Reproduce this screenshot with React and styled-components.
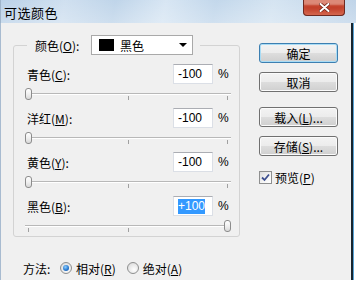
import React from "react";
import styled, { createGlobalStyle } from "styled-components";

const GlobalStyle = createGlobalStyle`
  html, body { margin: 0; padding: 0; background: #ffffff; }
  body {
    font-family: "Noto Sans CJK SC", "Liberation Sans", sans-serif;
    font-size: 12px;
    color: #000;
  }
  * { box-sizing: border-box; }
`;

const Window = styled.div`
  width: 356px;
  height: 280px;
  display: flex;
  flex-direction: column;
`;

const TitleBar = styled.div`
  height: 23px;
  flex: none;
  display: flex;
  align-items: flex-start;
  padding-left: 3px;
  background:
    linear-gradient(180deg, rgba(255,255,255,0.1), rgba(255,255,255,0.3)),
    linear-gradient(100deg, #b3cce5 0%, #cadcee 18%, #b8d0e7 32%, #d3e3f2 46%, #bcd3e9 60%, #d0e1f0 76%, #b8cfe6 100%);
  border-left: 1px solid #9fb4ca;
`;

const Title = styled.span`
  font-size: 13px;
  line-height: 13px;
  margin-top: 6px;
  letter-spacing: 0.5px;
`;

const CloseButton = styled.div`
  flex: 0 0 42px;
  margin-left: auto;
  margin-right: 11px;
  height: 16px;
  border: 1px solid #6e2a21;
  border-top-width: 0;
  border-radius: 0 0 4px 4px;
  background-color: #c2412b;
  box-shadow: inset 0 -6px 5px -3px #d66a52, inset 0 7px 2px -2px #dc8a78;
  display: flex;
  align-items: center;
  justify-content: center;
`;

const Body = styled.div`
  flex: 1;
  margin-right: 3px;
  background: #f0f0f0;
  border-left: 1px solid #a8bbd0;
  border-right: 2px solid #18252e;
  box-shadow: 1px 0 0 #5aa4d6;
  display: flex;
  flex-direction: column;
`;

const MainRow = styled.div`
  display: flex;
  align-items: flex-start;
  padding: 12px 0 0 12px;
`;

const GroupBox = styled.fieldset`
  width: 227px;
  margin: 0;
  padding: 9px 7px 0 13px;
  border: 1px solid #d3d3d3;
  border-radius: 3px;
  min-width: 0;
`;

const Legend = styled.legend`
  margin-left: 0;
  padding: 0 7px 0 8px;
  display: flex;
  align-items: center;
  gap: 3px;
  height: 20px;
`;

const LegendLabel = styled.span`
  width: 53px;
  white-space: nowrap;
`;

const Dropdown = styled.div`
  width: 102px;
  height: 20px;
  background: #fff;
  border: 1px solid #a9a9a9;
  display: flex;
  align-items: center;
  padding-left: 7px;
  gap: 6px;
`;

const Swatch = styled.div`
  width: 15px;
  height: 12px;
  background: ${(p) => p.$color};
`;

const Arrow = styled.div`
  margin-left: auto;
  margin-right: 5px;
  width: 0;
  height: 0;
  border-left: 4px solid transparent;
  border-right: 4px solid transparent;
  border-top: 4px solid #000;
`;

const Block = styled.div`
  margin-bottom: ${(p) => (p.$last ? 0 : 4)}px;
`;

const ControlRow = styled.div`
  display: flex;
  align-items: center;
  height: 20px;
`;

const Label = styled.span`
  flex: 1;
  white-space: nowrap;
`;

const NumberBox = styled.div`
  width: 40px;
  height: 20px;
  background: #fff;
  border: 1px solid #dbdfe6;
  border-top-color: #abadb3;
  display: flex;
  align-items: center;
  padding-left: 4px;
  font-family: "Liberation Sans", sans-serif;
  font-size: 12px;
`;

const Selected = styled.span`
  background: #3399ff;
  color: #fff;
  padding: 1px 0;
  line-height: 13px;
`;

const Percent = styled.span`
  width: 14px;
  margin-left: 5px;
  font-family: "Liberation Sans", sans-serif;
  font-size: 12px;
`;

const Slider = styled.div`
  position: relative;
  width: 206px;
  height: 20px;
  margin-left: -2px;
  padding-top: 9px;
`;

const Track = styled.div`
  height: 2px;
  border-top: 1px solid #b8b8b8;
  border-bottom: 1px solid #ffffff;
`;

const Tick = styled.div`
  position: absolute;
  top: 12px;
  width: 1px;
  height: 4px;
  background: #a0a0a0;
`;

const Thumb = styled.div`
  position: absolute;
  top: 4px;
  width: 7px;
  height: 12px;
  border: 1px solid #8c8c8c;
  border-radius: 3px;
  background: linear-gradient(180deg, #ffffff 0%, #f0f0f0 50%, #d8d8d8 100%);
`;

const RightColumn = styled.div`
  margin-left: 19px;
  padding-top: 8px;
  display: flex;
  flex-direction: column;
`;

const Button = styled.div`
  width: 79px;
  height: 20px;
  margin-bottom: ${(p) => p.$mb || 0}px;
  border: 1px solid ${(p) => (p.$default ? "#3c7fb1" : "#707070")};
  border-radius: 3px;
  background: linear-gradient(180deg, #f3f3f3 0%, #ececec 48%, #dddddd 52%, #cfcfcf 100%);
  box-shadow: inset 0 0 0 1px ${(p) => (p.$default ? "#a9dcf5" : "#fbfbfb")};
  display: flex;
  align-items: center;
  justify-content: center;
  white-space: nowrap;
`;

const CheckRow = styled.div`
  display: flex;
  align-items: center;
  gap: 3px;
  margin-top: 13px;
`;

const CheckBox = styled.div`
  width: 13px;
  height: 13px;
  border: 1px solid #8e8f8f;
  background: linear-gradient(135deg, #dcdcdc 0%, #f6f6f6 60%, #ffffff 100%);
  display: flex;
  align-items: center;
  justify-content: center;
`;

const BottomRow = styled.div`
  display: flex;
  align-items: center;
  height: 16px;
  margin-top: 23px;
  padding-left: 22px;
`;

const MethodLabel = styled.span`
  width: 37px;
`;

const RadioItem = styled.div`
  display: flex;
  align-items: center;
  gap: 4px;
  margin-right: 11px;
`;

const Radio = styled.div`
  width: 12px;
  height: 12px;
  border-radius: 50%;
  border: 1px solid #8e8f8f;
  background: radial-gradient(circle at 60% 65%, #ffffff 0%, #e6e6e6 60%, #d0d0d0 100%);
  display: flex;
  align-items: center;
  justify-content: center;
`;

const RadioDot = styled.div`
  width: 6px;
  height: 6px;
  border-radius: 50%;
  background: radial-gradient(circle at 40% 35%, #8fd0ff 0%, #2a7ad0 55%, #134f9c 100%);
`;

const channels = [
  { name: "青色", key: "C", value: -100 },
  { name: "洋红", key: "M", value: -100 },
  { name: "黄色", key: "Y", value: -100 },
  { name: "黑色", key: "B", value: 100, selected: true },
];

function Mnemonic({ text, k, suffix = "" }) {
  return (
    <>
      {text}(<u>{k}</u>){suffix}
    </>
  );
}

function SliderControl({ value }) {
  const left = ((value + 100) / 200) * (206 - 7);
  return (
    <Slider>
      <Track />
      <Tick style={{ left: 3 }} />
      <Tick style={{ left: 103 }} />
      <Tick style={{ left: 202 }} />
      <Thumb style={{ left }} />
    </Slider>
  );
}

export default function App() {
  return (
    <>
      <GlobalStyle />
      <Window>
        <TitleBar>
          <Title>可选颜色</Title>
          <CloseButton>
            <svg width="11" height="9" viewBox="0 0 11 9">
              <path d="M1.5 1 L9.5 8 M9.5 1 L1.5 8" stroke="#6a2014" strokeWidth="3.4" strokeLinecap="round" />
              <path d="M1.5 1 L9.5 8 M9.5 1 L1.5 8" stroke="#ffffff" strokeWidth="2" strokeLinecap="round" />
            </svg>
          </CloseButton>
        </TitleBar>
        <Body>
          <MainRow>
            <GroupBox>
              <Legend>
                <LegendLabel>
                  <Mnemonic text="颜色" k="O" suffix=":" />
                </LegendLabel>
                <Dropdown>
                  <Swatch $color="#000" />
                  <span>黑色</span>
                  <Arrow />
                </Dropdown>
              </Legend>
              {channels.map((c, i) => (
                <Block key={c.key} $last={i === channels.length - 1}>
                  <ControlRow>
                    <Label>
                      <Mnemonic text={c.name} k={c.key} suffix=":" />
                    </Label>
                    <NumberBox>
                      {c.selected ? (
                        <Selected>{c.value > 0 ? `+${c.value}` : c.value}</Selected>
                      ) : (
                        c.value
                      )}
                    </NumberBox>
                    <Percent>%</Percent>
                  </ControlRow>
                  <SliderControl value={c.value} />
                </Block>
              ))}
            </GroupBox>
            <RightColumn>
              <Button $default $mb={9}>确定</Button>
              <Button $mb={15}>取消</Button>
              <Button $mb={9}>
                <Mnemonic text="载入" k="L" suffix="..." />
              </Button>
              <Button>
                <Mnemonic text="存储" k="S" suffix="..." />
              </Button>
              <CheckRow>
                <CheckBox>
                  <svg width="9" height="9" viewBox="0 0 9 9">
                    <path d="M1 4.5 L3.5 7 L8 1.5" fill="none" stroke="#3d4f8f" strokeWidth="1.8" />
                  </svg>
                </CheckBox>
                <span>
                  <Mnemonic text="预览" k="P" />
                </span>
              </CheckRow>
            </RightColumn>
          </MainRow>
          <BottomRow>
            <MethodLabel>方法:</MethodLabel>
            <RadioItem>
              <Radio>
                <RadioDot />
              </Radio>
              <span>
                <Mnemonic text="相对" k="R" />
              </span>
            </RadioItem>
            <RadioItem>
              <Radio />
              <span>
                <Mnemonic text="绝对" k="A" />
              </span>
            </RadioItem>
          </BottomRow>
        </Body>
      </Window>
    </>
  );
}
